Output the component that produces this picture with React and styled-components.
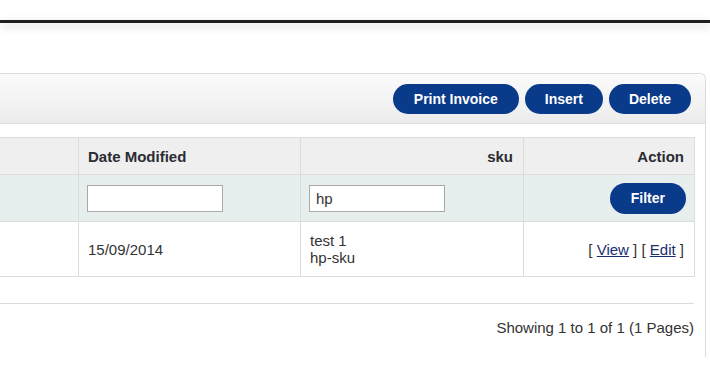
import React from 'react'
import styled, { createGlobalStyle } from 'styled-components'

const GlobalStyle = createGlobalStyle`
  body {
    margin: 0;
    background: #fff;
    font-family: "Liberation Sans", Arial, sans-serif;
    color: #333;
    overflow: hidden;
  }
`;

const TopBar = styled.div`
  margin-top: 20px;
  height: 3px;
  background: #1e1e1e;
  box-shadow: 0 3px 10px rgba(0, 0, 0, 0.22);
`;

const Panel = styled.div`
  margin: 50px 0 0 -20px;
  width: 726px;
  height: 284px;
  border: 1px solid #dcdcdc;
  border-bottom: none;
  border-radius: 0 6px 0 0;
  box-sizing: border-box;
`;

const PanelHeader = styled.div`
  height: 50px;
  box-sizing: border-box;
  display: flex;
  justify-content: flex-end;
  align-items: center;
  gap: 6px;
  padding: 0 14px 0 0;
  background: linear-gradient(#fbfbfb, #ececec);
  border-bottom: 1px solid #dcdcdc;
  border-radius: 0 6px 0 0;
`;

const Button = styled.button`
  height: ${p => p.$small ? 31 : 30}px;
  padding: 0 ${p => p.$pad}px;
  margin-right: ${p => p.$small ? -2 : 0}px;
  border: none;
  border-radius: 16px;
  background: #0a3a8a;
  color: #fff;
  font-family: "Liberation Sans", Arial, sans-serif;
  font-size: 14px;
  font-weight: bold;
  cursor: pointer;
`;

const Content = styled.div`
  padding: 13px 11px 0 10px;
`;

const Table = styled.table`
  width: 704px;
  table-layout: fixed;
  border-collapse: collapse;
  font-size: 15px;
  td {
    border: 1px solid #dcdcdc;
    padding: 0 10px 0 9px;
  }
`;

const HeadRow = styled.tr`
  height: 37px;
  background: #efefef;
  td {
    font-weight: bold;
    color: #2b2b33;
  }
`;

const FilterRow = styled.tr`
  height: 47px;
  background: #e7eeee;
`;

const DataRow = styled.tr`
  height: 55px;
  background: #fff;
  td { color: #333; }
`;

const Cell = styled.td`
  text-align: ${p => p.$align || 'left'};
  line-height: 17px;
  white-space: nowrap;
`;

const Input = styled.input`
  width: 136px;
  height: 27px;
  margin-left: -1px;
  box-sizing: border-box;
  border: 1px solid #a9a9a9;
  background: #fff;
  font-family: "Liberation Sans", Arial, sans-serif;
  font-size: 15px;
  padding: 0 6px;
  color: #333;
  outline: none;
  vertical-align: middle;
`;

const Link = styled.a`
  color: #1c2e6e;
  text-decoration: underline;
`;

const Footer = styled.div`
  margin-top: 26px;
  border-top: 1px solid #dcdcdc;
  padding-top: 15px;
  text-align: right;
  font-size: 15px;
  color: #333;
`;

export default function App() {
  return (
    <>
      <GlobalStyle />
      <TopBar />
      <Panel>
        <PanelHeader>
          <Button $pad={21}>Print Invoice</Button>
          <Button $pad={20}>Insert</Button>
          <Button $pad={20}>Delete</Button>
        </PanelHeader>
        <Content>
          <Table>
            <colgroup>
              <col style={{ width: 87 }} />
              <col style={{ width: 222 }} />
              <col style={{ width: 223 }} />
              <col />
            </colgroup>
            <tbody>
              <HeadRow>
                <Cell></Cell>
                <Cell>Date Modified</Cell>
                <Cell $align="right">sku</Cell>
                <Cell $align="right">Action</Cell>
              </HeadRow>
              <FilterRow>
                <Cell></Cell>
                <Cell><Input /></Cell>
                <Cell><Input defaultValue="hp" /></Cell>
                <Cell $align="right"><Button $small $pad={21}>Filter</Button></Cell>
              </FilterRow>
              <DataRow>
                <Cell></Cell>
                <Cell>15/09/2014</Cell>
                <Cell>test 1<br />hp-sku</Cell>
                <Cell $align="right">[ <Link href="#">View</Link> ] [ <Link href="#">Edit</Link> ]</Cell>
              </DataRow>
            </tbody>
          </Table>
          <Footer>Showing 1 to 1 of 1 (1 Pages)</Footer>
        </Content>
      </Panel>
    </>
  )
}
